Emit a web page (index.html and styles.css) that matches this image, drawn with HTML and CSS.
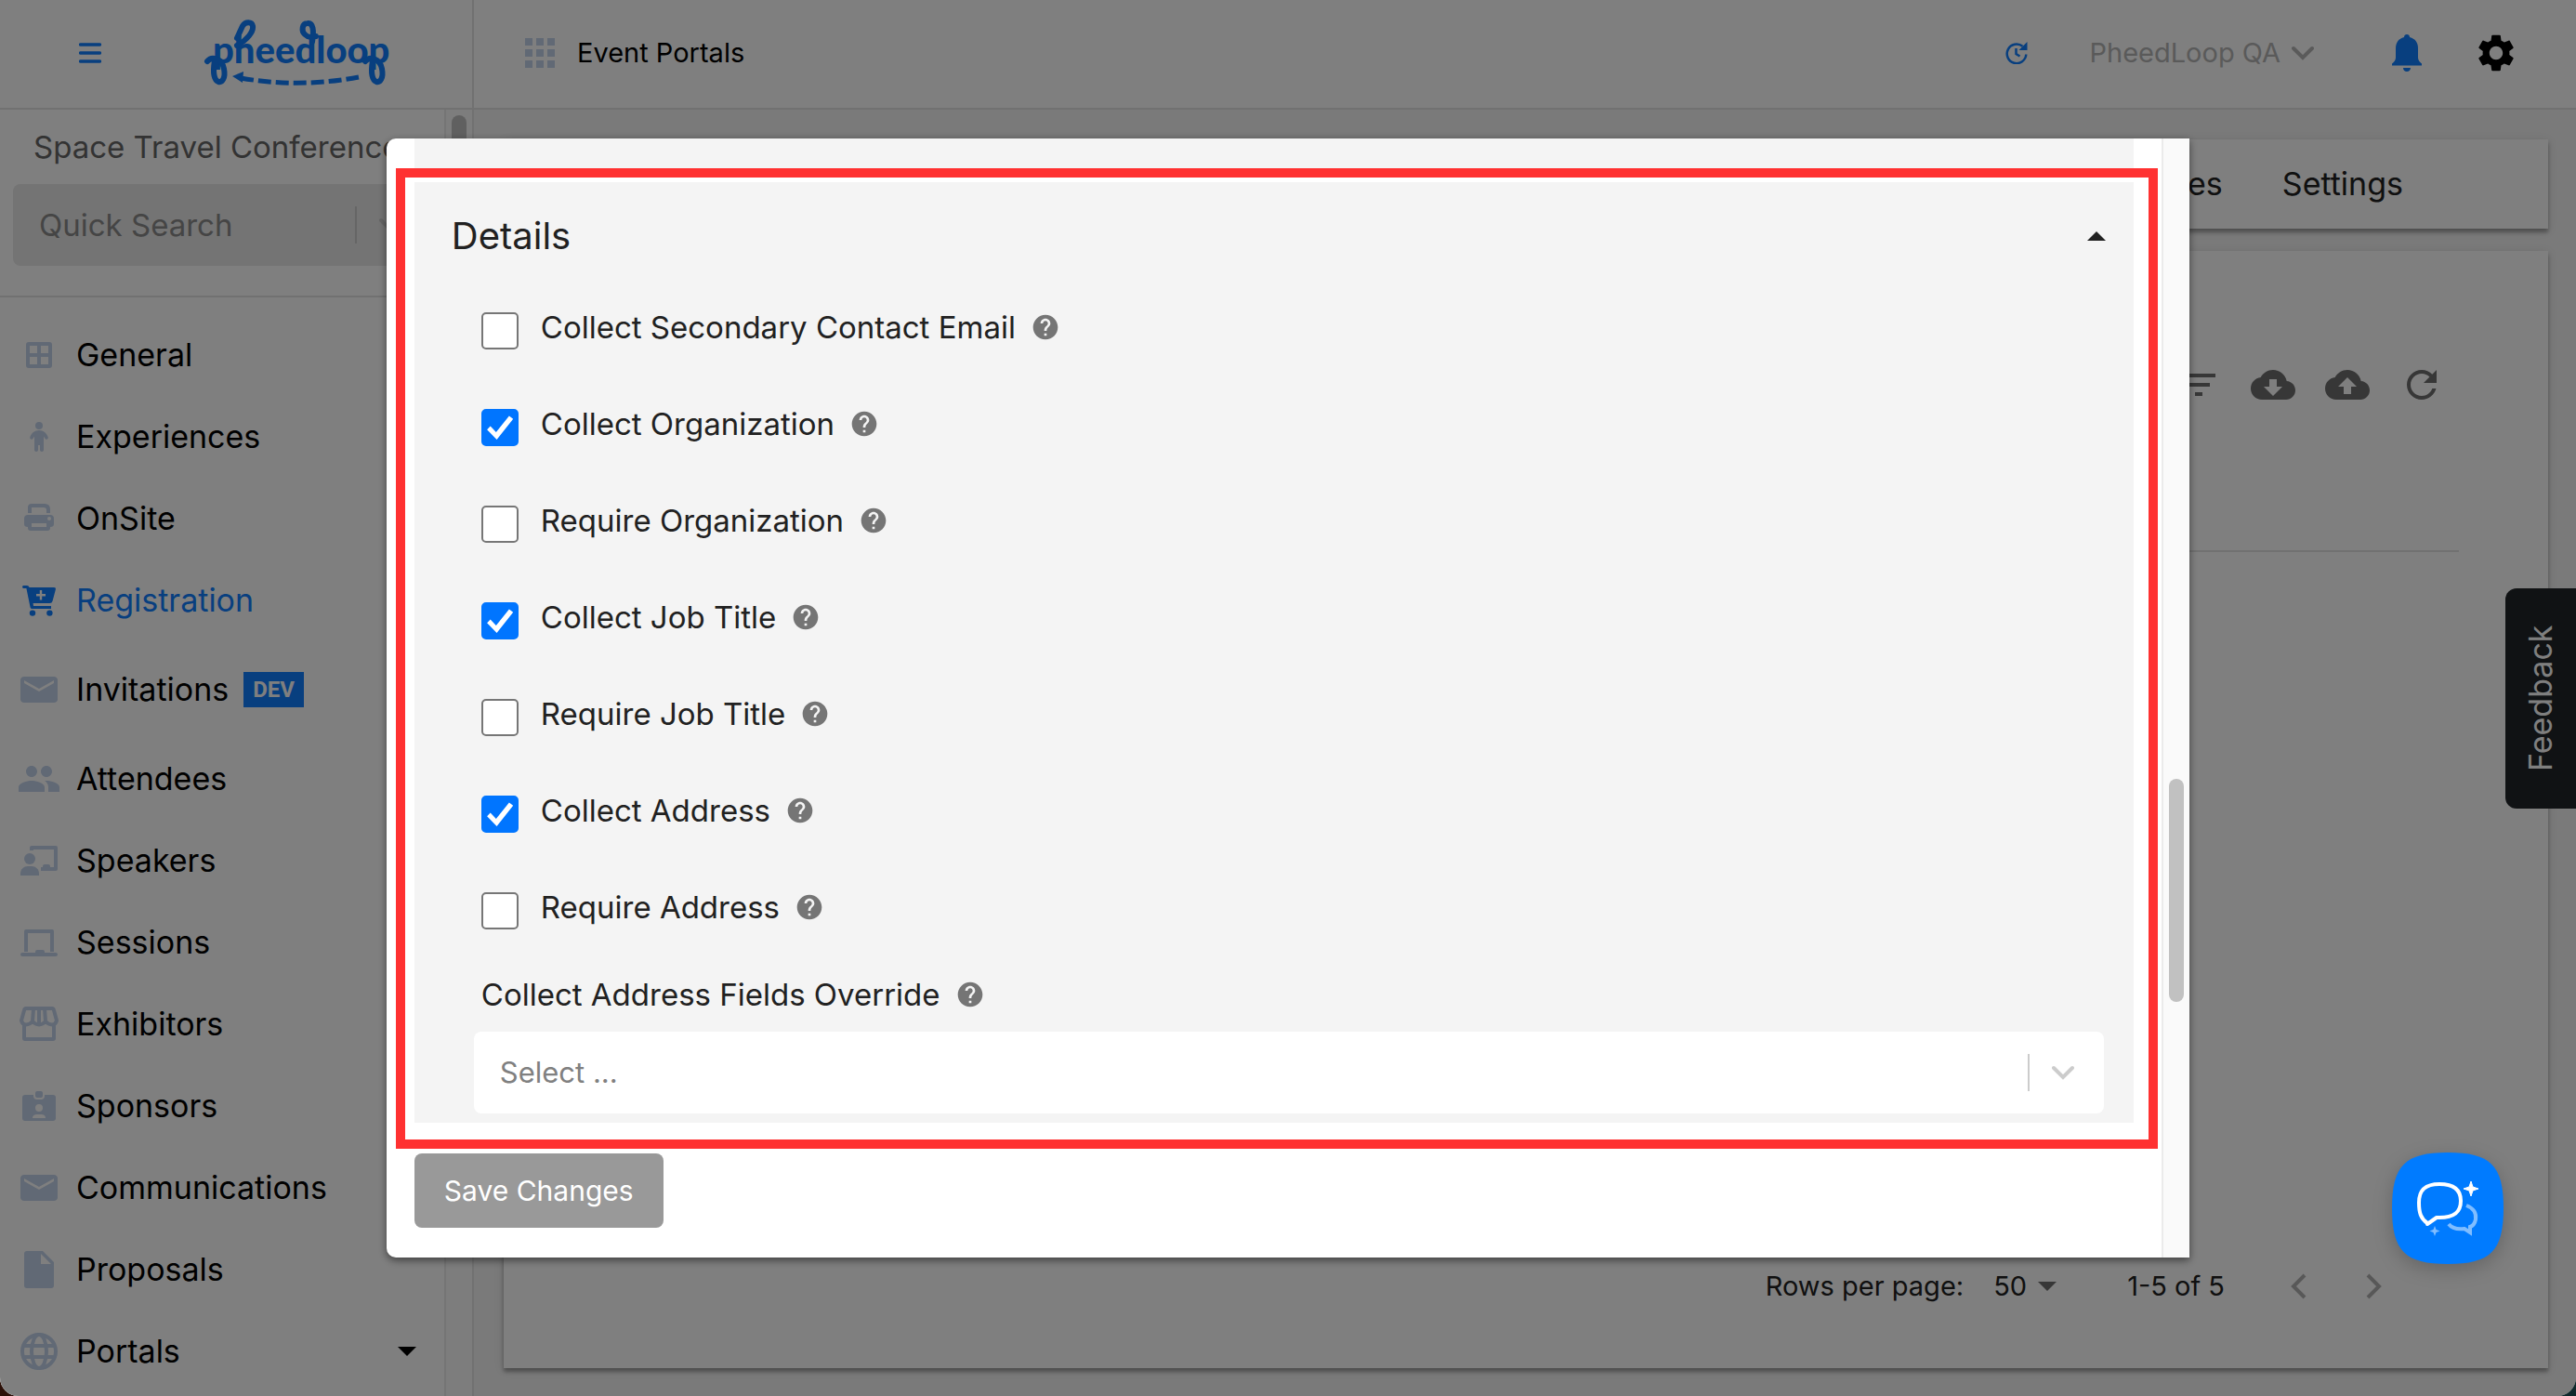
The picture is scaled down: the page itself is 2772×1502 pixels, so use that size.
FILE: index.html
```html
<!DOCTYPE html>
<html lang="en">
<head>
    <meta charset="UTF-8">
    <meta name="viewport" content="width=device-width, initial-scale=1">
    <title>Event Portals</title>
    <link rel="stylesheet" href="styles.css">
</head>
<body>
    <!-- shared icons -->
    <svg class="sprite" aria-hidden="true">
        <symbol id="help" viewBox="0 0 24 24"><path d="M12 2C6.48 2 2 6.48 2 12s4.48 10 10 10 10-4.48 10-10S17.52 2 12 2zm1 17h-2v-2h2v2zm2.07-7.75l-.9.92C13.45 12.9 13 13.5 13 15h-2v-.5c0-1.1.45-2.1 1.17-2.83l1.24-1.26c.37-.36.59-.86.59-1.41 0-1.1-.9-2-2-2s-2 .9-2 2H8c0-2.21 1.79-4 4-4s4 1.79 4 4c0 .88-.36 1.68-.93 2.25z"/></symbol>
        <symbol id="mail" viewBox="0 0 24 24"><path d="M20 5H4c-1.1 0-2 .8-2 1.800v10.400c0 1 .9 1.800 2 1.800h16c1.100 0 2-.8 2-1.800V6.800C22 5.800 21.100 5 20 5zm0 3.500l-8 4.500-8-4.500V7l8 4.500L20 7z"/></symbol>
        <symbol id="chevron" viewBox="0 0 24 24"><path d="M2 7l10 10L22 7" fill="none" stroke="currentColor" stroke-width="4" stroke-linecap="round"/></symbol>
        <symbol id="cloud-down" viewBox="0 0 24 24"><path d="M19.35 10.04C18.67 6.59 15.64 4 12 4 9.11 4 6.600 5.640 5.350 8.040 2.340 8.360 0 10.910 0 14c0 3.310 2.690 6 6 6h13c2.760 0 5-2.240 5-5 0-2.640-2.050-4.780-4.650-4.960zM17 13l-5 5-5-5h3V9h4v4h3z"/></symbol>
        <symbol id="cloud-up" viewBox="0 0 24 24"><path d="M19.35 10.04C18.67 6.59 15.64 4 12 4 9.11 4 6.600 5.640 5.350 8.040 2.340 8.360 0 10.910 0 14c0 3.310 2.690 6 6 6h13c2.760 0 5-2.240 5-5 0-2.640-2.050-4.780-4.650-4.960zM14 13v4h-4v-4H7l5-5 5 5h-3z"/></symbol>
    </svg>

    <div class="app">
        <header class="topbar">
            <div class="brand">
                <button class="icon-btn" aria-label="Toggle menu">
                    <svg class="burger" viewBox="0 0 24 24"><path d="M1.500 3h21M1.500 12h21M1.500 21h21" fill="none" stroke="currentColor" stroke-width="3.500" stroke-linecap="round"/></svg>
                </button>
                <svg class="logo" viewBox="0 0 200 72" role="img" aria-label="pheedloop">
                    <text class="logo-text" x="8" y="47">pheedloop</text>
                    <g fill="none" stroke="currentColor" stroke-width="6" stroke-linecap="round" stroke-linejoin="round">
                        <path d="M34 28C45 22 52 13 51 7 50 2 43 2 40 7L34 20"/>
                        <path d="M115 24C117 12 116 3 110 4 104 4 103 12 107 16 111 20 115 19 119 18"/>
                        <path d="M2 45C7 39 18 42 20 53 22 63 18 68 14 67 9 65 8 56 10 44"/>
                        <path d="M172 45C177 39 188 42 190 53 192 63 188 68 184 67 179 65 178 56 180 44"/>
                    </g>
                    <path d="M38 63Q101 74 165 62" fill="none" stroke="currentColor" stroke-width="5" stroke-dasharray="14 5"/>
                    <path d="M29 61l12-5-1 12z"/>
                </svg>
            </div>
            <div class="page-name">
                <svg class="apps" viewBox="0 0 32 32"><path d="M0 0h8v8H0zM12 0h8v8h-8zM24 0h8v8h-8zM0 12h8v8H0zM12 12h8v8h-8zM24 12h8v8h-8zM0 24h8v8H0zM12 24h8v8h-8zM24 24h8v8h-8z"/></svg>
                <span>Event Portals</span>
            </div>
            <div class="top-actions">
                <button class="icon-btn" aria-label="Recent updates">
                    <svg class="update" viewBox="0 0 24 24"><path d="M18.500 4.800A10.300 10.300 0 1 0 22.300 13.500M11.500 7v6l4 2.500" fill="none" stroke="currentColor" stroke-width="2.500"/><path d="M23.500 0v9h-9z"/></svg>
                </button>
                <button class="account">PheedLoop QA <svg class="chev"><use href="#chevron"/></svg></button>
                <button class="icon-btn bell" aria-label="Notifications">
                    <svg viewBox="0 0 32 40"><path d="M16 0c1.800 0 3 1.200 3 3 6 1.500 9 6 9 12v10c0 3 2 5 4 6.500V33.500H0V31.500C2 30 4 28 4 25V15C4 9 7 4.500 13 3c0-1.800 1.200-3 3-3zM12 36h8c0 2.500-1.800 4-4 4s-4-1.500-4-4z"/></svg>
                </button>
                <button class="icon-btn gear" aria-label="Settings">
                    <svg viewBox="0 0 24 24"><path d="M19.140 12.940c.04-.3.06-.61.06-.94 0-.32-.02-.64-.07-.94l2.030-1.580c.18-.14.23-.41.12-.61l-1.920-3.320c-.12-.22-.37-.29-.59-.22l-2.390.96c-.5-.38-1.030-.7-1.620-.94l-.36-2.540c-.04-.24-.24-.41-.48-.41h-3.840c-.24 0-.43.17-.47.41l-.36 2.540c-.59.24-1.130.57-1.620.94l-2.390-.96c-.22-.08-.47 0-.59.22L2.740 8.870c-.12.21-.08.47.12.61l2.030 1.580c-.05.3-.09.63-.09.94s.02.64.07.94l-2.030 1.580c-.18.14-.23.41-.12.61l1.920 3.320c.12.22.37.29.59.22l2.390-.96c.5.38 1.030.7 1.620.94l.36 2.540c.05.24.24.41.48.41h3.840c.24 0 .44-.17.47-.41l.36-2.540c.59-.24 1.130-.56 1.620-.94l2.390.96c.22.08.47 0 .59-.22l1.920-3.320c.12-.22.07-.47-.12-.61l-2.010-1.580zM12 15.600c-1.980 0-3.600-1.620-3.600-3.600s1.620-3.600 3.600-3.600 3.600 1.620 3.600 3.600-1.620 3.600-3.600 3.600z"/></svg>
                </button>
            </div>
        </header>

        <div class="layout">
            <aside class="sidebar">
                <div class="sidebar-content">
                    <div class="sidebar-top">
                        <div class="event-name">Space Travel Conference</div>
                        <div class="quick-search">
                            <input type="text" placeholder="Quick Search" aria-label="Quick Search">
                            <span class="indicator"><svg class="chev"><use href="#chevron"/></svg></span>
                        </div>
                    </div>
                    <nav>
                        <a href="#"><svg viewBox="0 0 24 24"><path d="M6.500 6h11q.5 0 .5.500v11q0 .5-.5.500h-11q-.5 0-.5-.500v-11q0-.5.500-.500zM12 6v12M6 12h12" fill="none" stroke="currentColor" stroke-width="2"/></svg>General</a>
                        <a href="#"><svg viewBox="0 0 24 24"><circle cx="12" cy="6" r="2"/><path d="M12 8.500c-2.500 0-4 1.500-4.800 3.500-.5 1.200 1 2 1.600.900l.7-1.200V19c0 1.300 2 1.300 2 0v-2.500h1V19c0 1.300 2 1.300 2 0v-7.300l.7 1.200c.6 1.100 2.100.3 1.600-.9C16 10 14.500 8.500 12 8.500z"/></svg>Experiences</a>
                        <a href="#"><svg viewBox="0 0 24 24"><path d="M6 9V6Q6 4 8 4h7q3 0 3 3v2h-2V7.500Q16 6 14.500 6H8v3zM6 10h12q2 0 2 2v3q0 1.500-2 1.500V17q0 1.500-1.500 1.500h-9Q6 18.500 6 17v-.500q-2 0-2-1.500v-3q0-2 2-2zm2 4.500v2h8v-2zm9.500-3.500a1 1 0 1 0 0 2 1 1 0 0 0 0-2z" fill-rule="evenodd"/></svg>OnSite</a>
                        <a href="#" class="active"><svg viewBox="0 0 24 24"><path d="M3.500 4H5.500q1 0 1.300 1H20q1.200 0 .9 1.200l-1.600 6q-.3 1.300-1.600 1.300H8.800l.2 1.500h9.500v1.500H8q-.6 0-.7-.700L5.200 5.500H3.500q-1-.7 0-1.500zM12.400 6.500v2H10.500v1.200h1.900v2h1.200v-2h1.900V8.500h-1.900v-2z" fill-rule="evenodd"/><circle cx="8.500" cy="18.800" r="1.600"/><circle cx="17.700" cy="18.800" r="1.600"/></svg>Registration</a>
                        <a href="#" class="with-badge"><svg><use href="#mail"/></svg>Invitations <span class="badge">DEV</span></a>
                        <a href="#"><svg viewBox="0 0 24 24"><path d="M16 11c1.660 0 2.990-1.340 2.990-3S17.660 5 16 5c-1.660 0-3 1.340-3 3s1.340 3 3 3zm-8 0c1.660 0 2.990-1.340 2.990-3S9.660 5 8 5C6.340 5 5 6.340 5 8s1.340 3 3 3zm0 2c-2.330 0-7 1.170-7 3.500V19h14v-2.500c0-2.330-4.670-3.500-7-3.500zm8 0c-.29 0-.62.02-.97.05 1.160.84 1.970 1.970 1.970 3.450V19h6v-2.500c0-2.330-4.670-3.500-7-3.500z"/></svg>Attendees</a>
                        <a href="#"><svg viewBox="0 0 24 24"><circle cx="7" cy="11" r="3"/><path d="M2 20v-1c0-2.500 1.800-4 4-4h2c2.200 0 4 1.500 4 4v1z"/><path d="M8 6.500V5h13v11.500h-8" fill="none" stroke="currentColor" stroke-width="2" stroke-linejoin="round"/><path d="M14 16.500V15q0-1 1-1h2q1 0 1 1v1.500z"/></svg>Speakers</a>
                        <a href="#"><svg viewBox="0 0 24 24"><path d="M5 17V6h14v11" fill="none" stroke="currentColor" stroke-width="2" stroke-linejoin="round"/><path d="M3 18.500h18" stroke="currentColor" stroke-width="2" stroke-linecap="round"/><path d="M10 18v-1q0-1 1-1h3q1 0 1 1v1z"/></svg>Sessions</a>
                        <a href="#"><svg viewBox="0 0 24 24"><path d="M4 12v7.500q0 .5.500.500h15q.5 0 .5-.500V12M5 3.500h14q.8 0 1 1L21.500 10q-.5 2.200-2.500 2.200T15.500 10.500Q14 12.200 12 12.200T8.500 10.500Q7 12.200 5 12.200T2.500 10L4 4.500q.2-1 1-1zM8.500 10.500l.5-7M12 12V3.500M15.500 10.500l-.5-7" fill="none" stroke="currentColor" stroke-width="2" stroke-linejoin="round"/></svg>Exhibitors</a>
                        <a href="#"><svg viewBox="0 0 24 24"><path d="M4.500 6H9v.5Q9 8.500 11 8.500h2q2 0 2-2V6h4.500Q21 6 21 7.500v11q0 1.500-1.500 1.500h-15Q3 20 3 18.500v-11Q3 6 4.500 6zM12 11a2 2 0 1 0 0 4 2 2 0 0 0 0-4zM8.500 18.500h7q0-2-2.500-2h-2q-2.500 0-2.500 2z" fill-rule="evenodd"/><rect x="10" y="4" width="4" height="3.500" rx="1"/></svg>Sponsors</a>
                        <a href="#"><svg><use href="#mail"/></svg>Communications</a>
                        <a href="#"><svg viewBox="0 0 24 24"><path d="M5.500 2H14l6 6v12.500q0 1.500-1.500 1.500h-13Q4 22 4 20.500v-17Q4 2 5.500 2zM13 3.500V9h5.500z" fill-rule="evenodd"/></svg>Proposals</a>
                        <a href="#"><svg viewBox="0 0 24 24"><g fill="none" stroke="currentColor" stroke-width="2"><circle cx="12" cy="12" r="9"/><ellipse cx="12" cy="12" rx="4" ry="9"/><path d="M4 9h16M4 15h16"/></g></svg>Portals<i class="caret"></i></a>
                    </nav>
                </div>
                <div class="track"><div class="thumb"></div></div>
            </aside>

            <main>
                <div class="card tabs">
                    <a href="#">Packages</a>
                    <a href="#">Settings</a>
                </div>
                <section class="card listing">
                    <div class="tools">
                        <button class="icon-btn" aria-label="Filter"><svg viewBox="0 0 24 24"><path d="M10 18h4v-2h-4v2zM3 6v2h18V6H3zm3 7h12v-2H6v2z"/></svg></button>
                        <button class="icon-btn" aria-label="Download"><svg><use href="#cloud-down"/></svg></button>
                        <button class="icon-btn" aria-label="Upload"><svg><use href="#cloud-up"/></svg></button>
                        <button class="icon-btn" aria-label="Refresh"><svg viewBox="0 0 24 24"><path d="M17.650 6.350C16.200 4.900 14.210 4 12 4c-4.420 0-7.990 3.580-7.990 8s3.570 8 7.990 8c3.730 0 6.840-2.550 7.730-6h-2.080c-.82 2.330-3.040 4-5.650 4-3.310 0-6-2.690-6-6s2.690-6 6-6c1.660 0 3.140.69 4.220 1.780L13 11h7V4l-2.350 2.350z"/></svg></button>
                    </div>
                    <div class="rows"></div>
                    <footer class="pagination">
                        <label for="per-page">Rows per page:</label>
                        <select id="per-page"><option>50</option></select>
                        <i class="caret"></i>
                        <span class="range">1-5 of 5</span>
                        <button class="icon-btn" aria-label="Previous page"><svg viewBox="0 0 24 24"><path d="M15 6l-6 6 6 6" fill="none" stroke="currentColor" stroke-width="2"/></svg></button>
                        <button class="icon-btn" aria-label="Next page"><svg viewBox="0 0 24 24"><path d="M9 6l6 6-6 6" fill="none" stroke="currentColor" stroke-width="2"/></svg></button>
                    </footer>
                </section>
            </main>
        </div>
        <button class="feedback">Feedback</button>
    </div>

    <div class="backdrop">
        <div class="modal" role="dialog" aria-label="Details">
            <div class="modal-content">
                <div class="modal-scroll">
                    <div class="panel previous"></div>
                    <section class="panel">
                        <h2 class="panel-head">Details<i class="caret up"></i></h2>
                        <div class="fields">
                            <div class="checks">
                                <div class="check"><input type="checkbox" id="c1"><label for="c1">Collect Secondary Contact Email</label><svg class="help"><use href="#help"/></svg></div>
                                <div class="check"><input type="checkbox" id="c2" checked><label for="c2">Collect Organization</label><svg class="help"><use href="#help"/></svg></div>
                                <div class="check"><input type="checkbox" id="c3"><label for="c3">Require Organization</label><svg class="help"><use href="#help"/></svg></div>
                                <div class="check"><input type="checkbox" id="c4" checked><label for="c4">Collect Job Title</label><svg class="help"><use href="#help"/></svg></div>
                                <div class="check"><input type="checkbox" id="c5"><label for="c5">Require Job Title</label><svg class="help"><use href="#help"/></svg></div>
                                <div class="check"><input type="checkbox" id="c6" checked><label for="c6">Collect Address</label><svg class="help"><use href="#help"/></svg></div>
                                <div class="check"><input type="checkbox" id="c7"><label for="c7">Require Address</label><svg class="help"><use href="#help"/></svg></div>
                            </div>
                            <div class="field-label"><label for="override">Collect Address Fields Override</label><svg class="help"><use href="#help"/></svg></div>
                            <div class="select-box">
                                <select id="override"><option>Select ...</option></select>
                                <span class="indicator"><svg class="chev"><use href="#chevron"/></svg></span>
                            </div>
                        </div>
                    </section>
                </div>
                <button class="save">Save Changes</button>
            </div>
            <div class="track"><div class="thumb"></div></div>
            <div class="highlight"></div>
        </div>
    </div>

    <button class="chat" aria-label="Open chat">
        <svg viewBox="0 0 120 120">
            <path d="M60 0C106 0 120 14 120 60s-14 60-60 60S0 106 0 60 14 0 60 0z" fill="#007bff"/>
            <path d="M38 76C31 71 29 65 29 54 29 40 36 34 51 34s23 6 23 18-7 18-23 18h-3l-10 7z" fill="none" stroke="#fff" stroke-width="4" stroke-linejoin="round"/>
            <path d="M80 57c8 3 11 8 10 15-1 5-3 7-6 8v6l-6-4c-8 1-14-1-17-5" fill="none" stroke="#80bdff" stroke-width="4"/>
            <path d="M85 31l2 6 6 2-6 2-2 6-2-6-6-2 6-2z" fill="#fff" stroke="#fff"/>
            <path d="M46 79l1.500 4 4 1.500-4 1.500-1.500 4-1.500-4-4-1.500 4-1.500z" fill="#80bdff"/>
        </svg>
    </button>
</body>
</html>
```

FILE: styles.css
```css
:root {
    --clr-primary: #107eff;
    --clr-icon: #c2d2ea;
    --clr-line: #e2e2e2;
    --clr-text: #212121;
}

*, *::before, *::after {
    box-sizing: border-box;
}

html {
    background: linear-gradient(90deg, #2c1008, #10292c);
}

body {
    margin: 0;
    height: 100vh;
    overflow: hidden;
    font-family: Inter, "Liberation Sans", sans-serif;
    font-size: 33px;
    line-height: 48px;
    color: var(--clr-text);
}

button, input, select {
    font: inherit;
    color: inherit;
    border: 0;
    background: none;
    padding: 0;
    margin: 0;
}

select {
    appearance: none;
}

a {
    color: inherit;
    text-decoration: none;
}

svg {
    display: block;
    flex: none;
    fill: currentColor;
}

.sprite {
    display: none;
}

.app {
    height: 100vh;
    display: flex;
    flex-direction: column;
    background: #f4f4f4;
    border-radius: 0 0 20px 20px;
    overflow: hidden;
}

.caret {
    border: 10px solid transparent;
    border-top-color: currentColor;
    border-bottom: 0;
}

.caret.up {
    border-bottom: 10px solid currentColor;
    border-top: 0;
}

.chev {
    width: 24px;
    height: 24px;
}

.icon-btn {
    display: flex;
    align-items: center;
    justify-content: center;
}

/* top bar */
.topbar {
    display: flex;
    height: 118px;
    flex: none;
    padding-bottom: 2px;
    background: white;
    border-bottom: 2px solid var(--clr-line);
    font-size: 29px;
}

.brand {
    width: 510px;
    margin-bottom: -2px;
    padding: 0 0 2px 85px;
    display: flex;
    align-items: center;
    gap: 112px;
    color: var(--clr-primary);
    border-right: 2px solid var(--clr-line);
}

.burger, .update {
    width: 24px;
    height: 24px;
}

.logo {
    width: 200px;
    height: 72px;
    overflow: visible;
}

.logo-text {
    font-family: Lato, sans-serif;
    font-size: 40px;
    font-weight: 900;
}

.page-name {
    display: flex;
    align-items: center;
    gap: 24px;
    padding-left: 55px;
    color: black;
}

.apps {
    width: 32px;
    height: 32px;
    color: var(--clr-icon);
}

.top-actions {
    margin-left: auto;
    padding-right: 62px;
    display: flex;
    align-items: center;
    color: var(--clr-primary);
}

.account {
    display: flex;
    align-items: center;
    gap: 12px;
    margin-left: 66px;
    color: #b4b4b4;
}

.bell {
    margin-left: 84px;
}

.bell svg {
    width: 32px;
    height: 40px;
}

.gear {
    margin-left: 56px;
    color: black;
}

.gear svg {
    width: 48px;
    height: 48px;
}

/* sidebar */
.layout {
    display: flex;
    flex: 1;
    min-height: 0;
}

.sidebar {
    width: 510px;
    display: flex;
    background: white;
    border-right: 2px solid var(--clr-line);
}

.sidebar-content {
    flex: 1;
    min-width: 0;
    overflow: hidden;
}

.sidebar-top {
    padding: 16px 14px 32px;
    border-bottom: 2px solid var(--clr-line);
}

.event-name {
    padding: 0 22px;
    height: 64px;
    white-space: nowrap;
    color: #666;
}

.quick-search, .select-box {
    display: flex;
    align-items: center;
    height: 88px;
    border-radius: 8px;
}

.quick-search {
    background: #e8e8e8;
}

.quick-search input {
    flex: 1;
    min-width: 0;
    padding-left: 28px;
}

.quick-search input::placeholder {
    color: #8a8a8a;
    opacity: 1;
}

.indicator {
    width: 82px;
    height: 40px;
    display: flex;
    align-items: center;
    justify-content: center;
    padding-right: 8px;
    border-left: 2px solid #ccc;
    color: #ccc;
}

nav {
    padding-top: 18px;
    font-size: 34px;
    color: black;
}

nav a {
    display: flex;
    align-items: center;
    height: 88px;
    padding: 0 30px 0 18px;
    gap: 16px;
}

nav svg {
    width: 48px;
    height: 48px;
    color: var(--clr-icon);
}

nav .with-badge {
    height: 104px;
}

nav .active, nav .active svg {
    color: var(--clr-primary);
}

nav .caret {
    margin-left: auto;
}

.badge {
    padding: 0 10px;
    background: var(--clr-primary);
    color: white;
    font-family: Roboto, sans-serif;
    font-size: 24px;
    font-weight: 700;
    line-height: 38px;
}

.track {
    width: 30px;
    flex: none;
    padding: 6px;
    border-left: 2px solid #ebebeb;
    background: #fafafa;
}

.thumb {
    height: 240px;
    width: 16px;
    border-radius: 8px;
    background: #c1c1c1;
}

/* main area */
main {
    flex: 1;
    display: flex;
    flex-direction: column;
    gap: 24px;
    padding: 32px 30px 30px 32px;
}

.card {
    background: white;
    box-shadow: 0 4px 4px rgba(0, 0, 0, 0.3), 0 2px 10px rgba(0, 0, 0, 0.12);
}

.tabs {
    display: flex;
    justify-content: flex-end;
    gap: 64px;
    padding: 24px 156px 24px 24px;
    font-size: 34px;
}

.listing {
    flex: 1;
    display: flex;
    flex-direction: column;
    padding: 104px 96px 48px;
}

.tools {
    display: flex;
    justify-content: flex-end;
    height: 220px;
    align-items: flex-start;
    border-bottom: 2px solid var(--clr-line);
    color: #6e6e6e;
}

.tools .icon-btn, .pagination .icon-btn {
    width: 80px;
    height: 80px;
}

.tools svg, .pagination svg {
    width: 48px;
    height: 48px;
}

.rows {
    flex: 1;
}

.pagination {
    display: flex;
    align-items: center;
    justify-content: flex-end;
    padding-right: 52px;
    font-size: 29px;
}

.pagination select {
    width: 40px;
    margin: 0 8px 0 32px;
}

.pagination .caret {
    color: #6e6e6e;
}

.range {
    margin: 0 40px 0 76px;
}

.pagination .icon-btn {
    color: #b0b0b0;
}

.feedback {
    position: fixed;
    right: 0;
    top: 633px;
    width: 76px;
    height: 237px;
    border-radius: 0 12px 12px 0;
    background: #202428;
    color: white;
    font-size: 34px;
    writing-mode: vertical-rl;
    transform: rotate(180deg);
}

/* dialog */
.backdrop {
    position: fixed;
    inset: 0;
    display: flex;
    align-items: center;
    justify-content: center;
    background: rgba(0, 0, 0, 0.5);
    border-radius: 0 0 20px 20px;
}

.modal {
    position: relative;
    display: flex;
    width: 70%;
    height: calc(100vh - 298px);
    background: white;
    border-radius: 10px 0 0 10px;
    box-shadow: 0 3px 8px rgba(0, 0, 0, 0.5);
}

.modal-content {
    flex: 1;
    display: flex;
    flex-direction: column;
    align-items: flex-start;
    padding: 0 30px 32px;
}

.modal-scroll {
    flex: 1;
    width: 100%;
    overflow: hidden;
}

.modal .track {
    padding-top: 689px;
}

.panel {
    background: #f4f4f4;
}

.previous {
    height: 35px;
    margin-bottom: 12px;
}

.panel-head {
    display: flex;
    align-items: center;
    justify-content: space-between;
    margin: 0;
    height: 116px;
    padding: 0 30px 0 40px;
    font-size: 40px;
    font-weight: 400;
}

.fields {
    padding: 16px 32px 10px 64px;
}

.checks {
    display: flex;
    flex-direction: column;
    gap: 56px;
    padding-left: 8px;
}

.check, .field-label {
    display: flex;
    align-items: center;
    height: 48px;
}

.check input {
    appearance: none;
    width: 40px;
    height: 40px;
    margin: 8px 24px 0 0;
    background: white;
    border: 2px solid #767676;
    border-radius: 5px;
}

.check input:checked {
    background: #0075ff;
    border-color: #0075ff;
}

.check input:checked::before {
    content: "";
    display: block;
    height: 36px;
    background: white;
    clip-path: polygon(12% 56%, 22% 46%, 39% 64%, 78% 15%, 90% 24%, 41% 86%);
}

.help {
    width: 32px;
    height: 32px;
    margin-left: 16px;
    color: #757575;
}

.field-label {
    margin: 46px 0 16px;
    padding-left: 8px;
}

.select-box {
    background: white;
}

.select-box select {
    flex: 1;
    padding-left: 28px;
    font-size: 31px;
    color: #808080;
}

.save {
    height: 80px;
    padding: 0 32px;
    border-radius: 8px;
    background: #999;
    color: white;
    font-size: 30px;
}

.highlight {
    position: absolute;
    inset: 32px 34px 117px 10px;
    border: 10px solid #ff3131;
    pointer-events: none;
}

.chat {
    position: fixed;
    right: 78px;
    bottom: 142px;
    width: 120px;
    height: 120px;
    filter: drop-shadow(0 6px 10px rgba(0, 0, 0, 0.2));
}
```
